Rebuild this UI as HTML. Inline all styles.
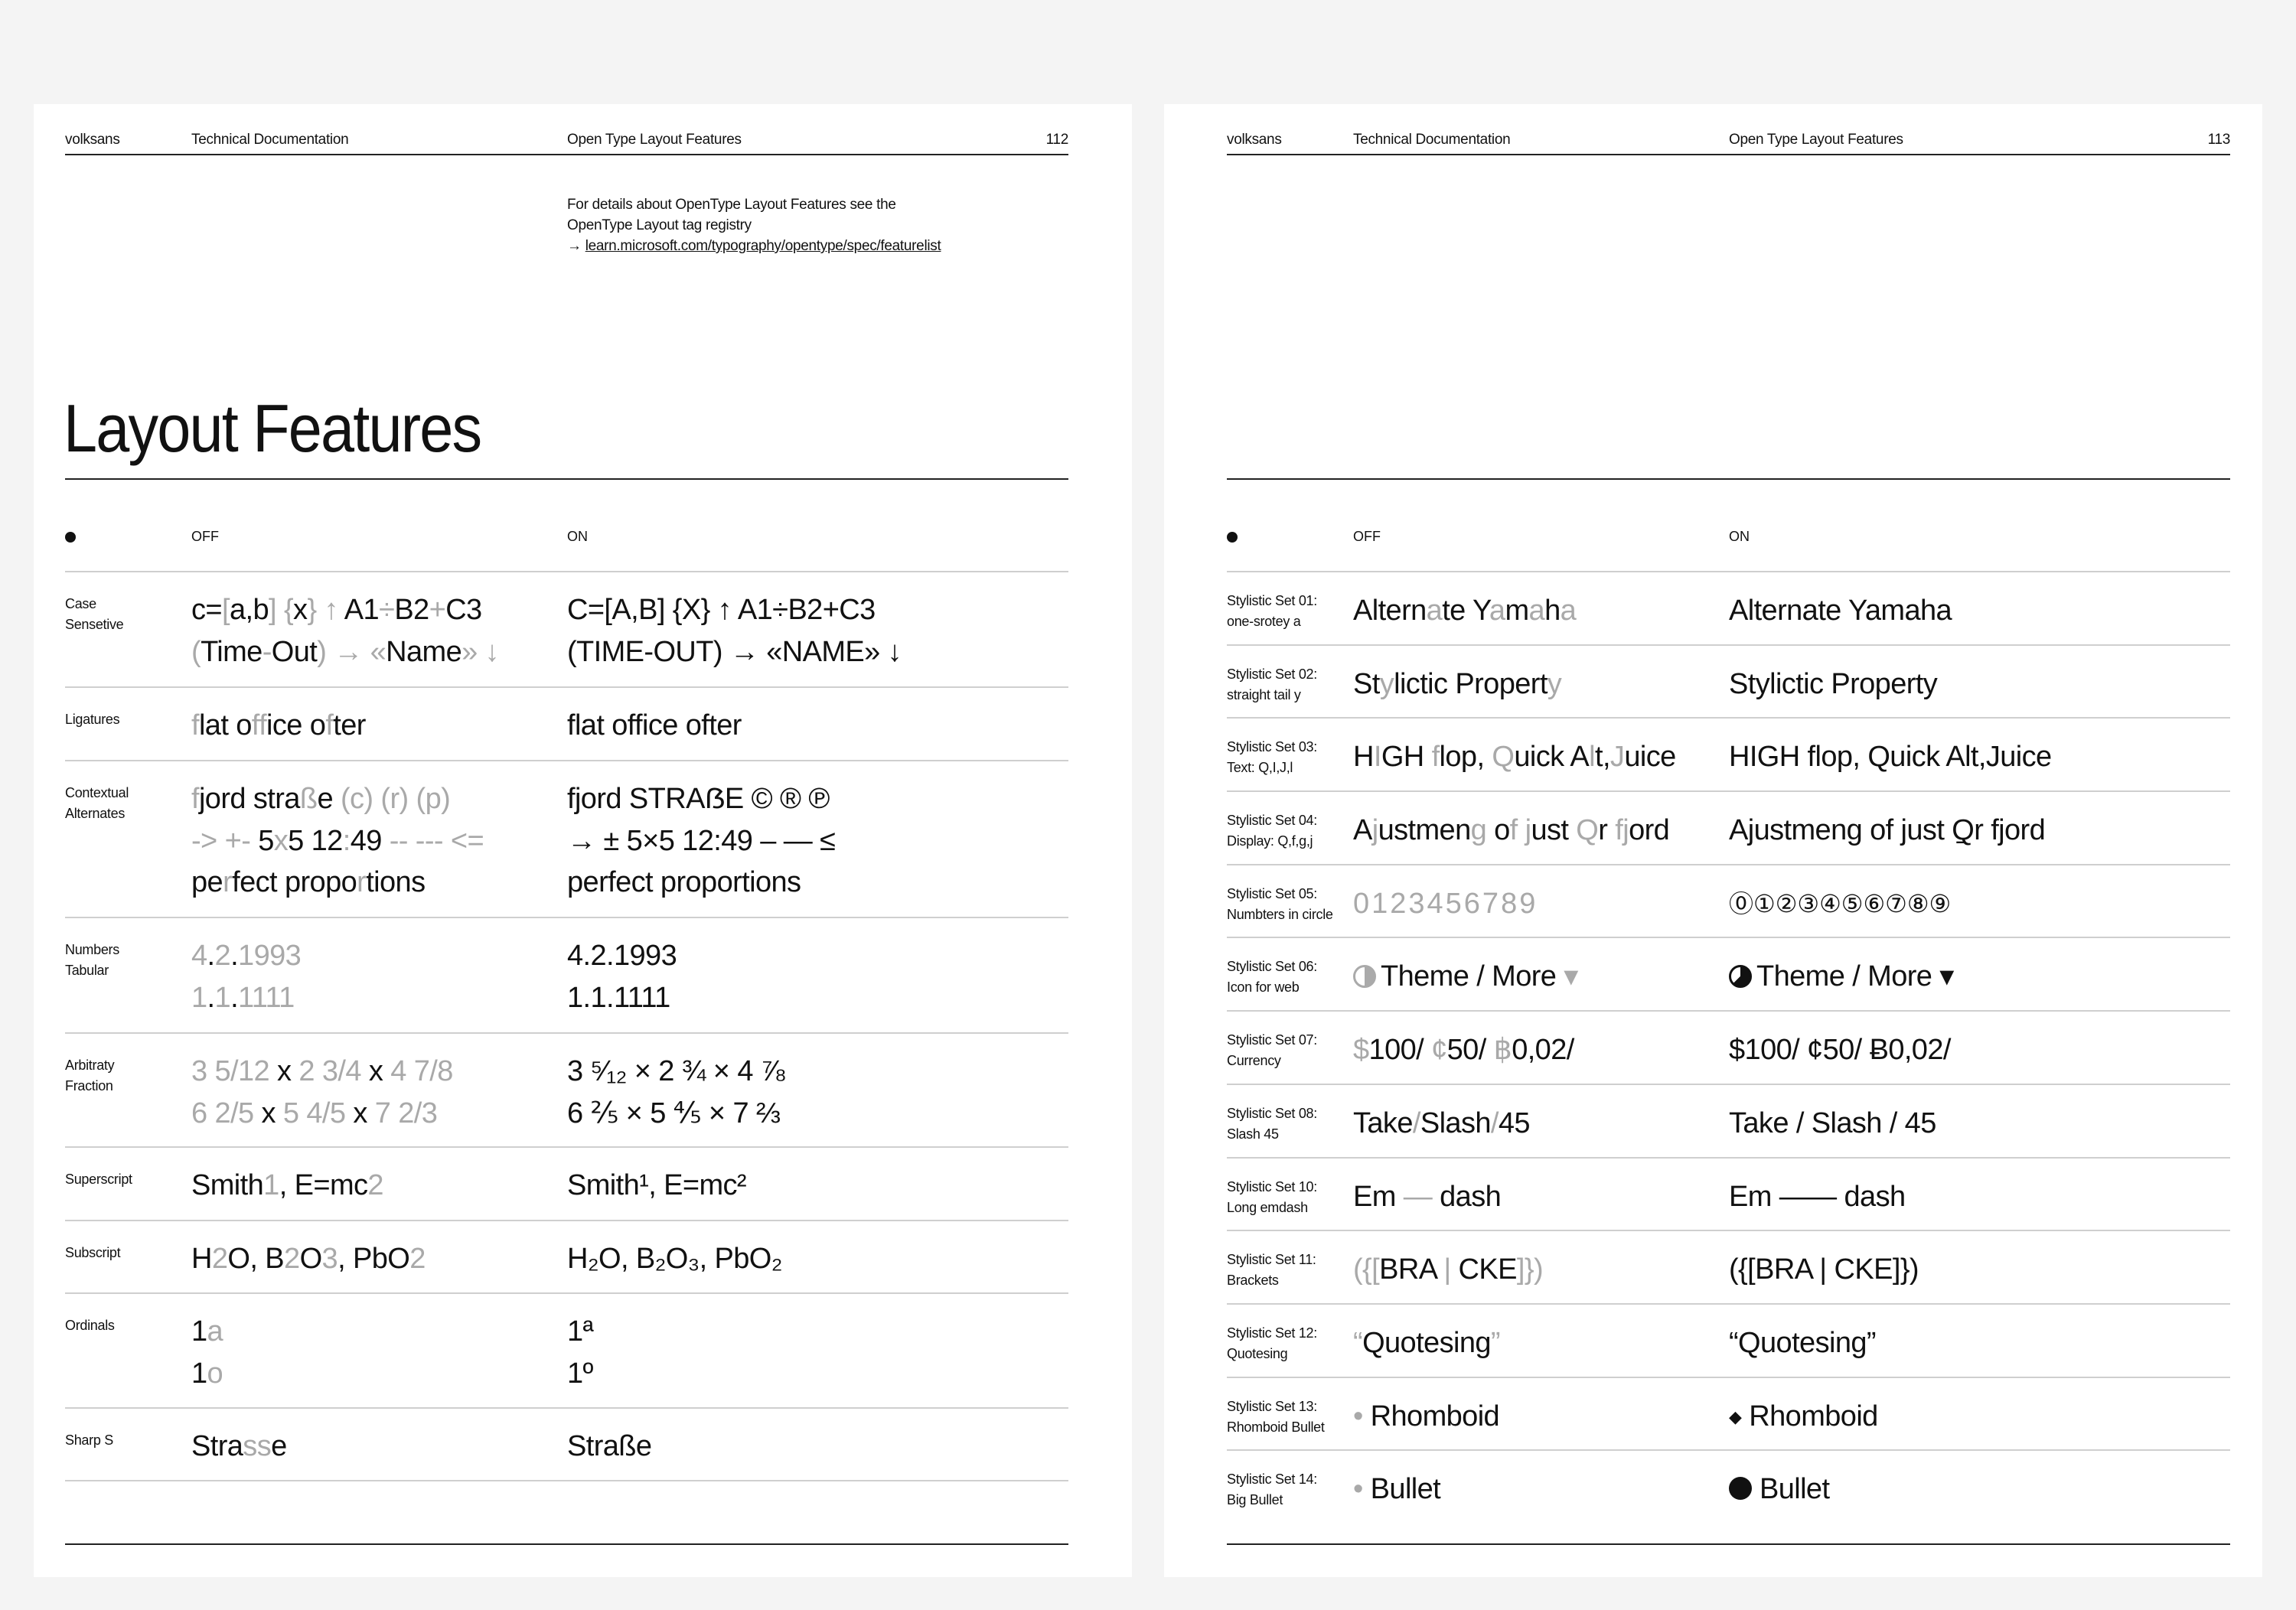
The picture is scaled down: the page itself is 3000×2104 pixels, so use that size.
<!DOCTYPE html>
<html><head><meta charset="utf-8"><style>
*{margin:0;padding:0;box-sizing:border-box}
body{width:3000px;height:2104px;background:#f4f4f4;font-family:"Liberation Sans","DejaVu Sans",sans-serif;color:#111;position:relative;overflow:hidden}
.page{position:absolute;top:136px;width:1435px;height:1925px;background:#fff}
.p1{left:44px}.p2{left:1521px}
.in{position:absolute;left:41px;width:1311px;top:0;height:100%}
.p2 .in{left:82px}
.hdr{position:absolute;top:36px;left:0;width:100%;height:31px;border-bottom:2px solid #222;font-size:19px;letter-spacing:-0.3px}
.hdr span{position:absolute;top:0}
.c1{left:0}.c2{left:165px}.c3{left:656px}
.num{right:0}
.intro{position:absolute;left:656px;top:118px;font-size:19px;line-height:27px;letter-spacing:-0.3px}
.intro u{text-decoration:underline}
.title{position:absolute;left:-2px;top:374px;font-size:88px;letter-spacing:-2px;line-height:100px;transform:scaleX(.9);transform-origin:left;white-space:nowrap}
.tline{position:absolute;left:0;top:489px;width:100%;border-top:2px solid #222}
.hrow{position:absolute;top:555px;left:0;width:100%;height:57px;border-bottom:2px solid #cfcfcf;font-size:18px}
.hrow .dot{position:absolute;left:0;top:4px;width:14px;height:14px;border-radius:50%;background:#111}
.hrow span{position:absolute;top:0}
.rows{position:absolute;top:612px;left:0;width:100%}
.row{position:relative;border-bottom:2px solid #cfcfcf}
.row.nb{border-bottom:none}
.lab{position:absolute;left:0;top:28px;font-size:18px;line-height:27px;letter-spacing:-0.3px}
.off,.on{position:absolute;top:22px;font-size:38px;line-height:54.5px;letter-spacing:-0.6px;white-space:nowrap}
.off{left:165px}.on{left:656px}
.g{color:#a9a9a9}
.bline{position:absolute;left:0;top:1881px;width:100%;border-top:2px solid #222}
.r2 .off,.r2 .on{top:23px}
.r2 .lab{top:24px}
.half{display:inline-block;width:30px;height:30px;border-radius:50%;vertical-align:-3px;margin-right:6px}
</style></head><body>

<div class="page p1"><div class="in">
<div class="hdr"><span class="c1">volksans</span><span class="c2">Technical Documentation</span><span class="c3">Open Type Layout Features</span><span class="num">112</span></div>
<div class="intro">For details about OpenType Layout Features see the<br>OpenType Layout tag registry<br>→ <u>learn.microsoft.com/typography/opentype/spec/featurelist</u></div>
<div class="title">Layout Features</div>
<div class="tline"></div>
<div class="hrow"><div class="dot"></div><span class="c2">OFF</span><span class="c3">ON</span></div>
<div class="rows">
<div class="row" style="height:151px"><div class="lab">Case<br>Sensetive</div>
<div class="off">c=<span class="g">[</span>a,b<span class="g">]</span> <span class="g">{</span>x<span class="g">}</span> <span class="g">↑</span> A1<span class="g">÷</span>B2<span class="g">+</span>C3<br><span class="g">(</span>Time<span class="g">-</span>Out<span class="g">)</span> <span class="g">→ «</span>Name<span class="g">» ↓</span></div>
<div class="on">C=[A,B] {X} ↑ A1÷B2+C3<br>(TIME-OUT) → «NAME» ↓</div></div>
<div class="row" style="height:96px"><div class="lab">Ligatures</div>
<div class="off"><span class="g">f</span>lat o<span class="g">ff</span>ice o<span class="g">f</span>ter</div>
<div class="on">flat office ofter</div></div>
<div class="row" style="height:205px"><div class="lab">Contextual<br>Alternates</div>
<div class="off"><span class="g">f</span>jord stra<span class="g">ß</span>e <span class="g">(c) (r) (p)</span><br><span class="g">-&gt; +-</span> 5<span class="g">x</span>5 12<span class="g">:</span>49 <span class="g">-- --- &lt;=</span><br>pe<span class="g">r</span>fect propo<span class="g">r</span>tions</div>
<div class="on">fjord STRAẞE © ® ℗<br>→ ± 5×5 12:49 – — ≤<br>perfect proportions</div></div>
<div class="row" style="height:151px"><div class="lab">Numbers<br>Tabular</div>
<div class="off g">4<span style="color:#111">.</span>2<span style="color:#111">.</span>1993<br>1<span style="color:#111">.</span>1<span style="color:#111">.</span>1111</div>
<div class="on">4.2.1993<br>1.1.1111</div></div>
<div class="row" style="height:149px"><div class="lab">Arbitraty<br>Fraction</div>
<div class="off"><span class="g">3 5/12</span> x <span class="g">2 3/4</span> x <span class="g">4 7/8</span><br><span class="g">6 2/5</span> x <span class="g">5 4/5</span> x <span class="g">7 2/3</span></div>
<div class="on">3 ⁵⁄₁₂ × 2 ¾ × 4 ⅞<br>6 ⅖ × 5 ⅘ × 7 ⅔</div></div>
<div class="row" style="height:96px"><div class="lab">Superscript</div>
<div class="off">Smith<span class="g">1</span>, E=mc<span class="g">2</span></div>
<div class="on">Smith¹, E=mc²</div></div>
<div class="row" style="height:95px"><div class="lab">Subscript</div>
<div class="off">H<span class="g">2</span>O, B<span class="g">2</span>O<span class="g">3</span>, PbO<span class="g">2</span></div>
<div class="on">H₂O, B₂O₃, PbO₂</div></div>
<div class="row" style="height:150px"><div class="lab">Ordinals</div>
<div class="off">1<span class="g">a</span><br>1<span class="g">o</span></div>
<div class="on">1ª<br>1º</div></div>
<div class="row" style="height:95px"><div class="lab">Sharp S</div>
<div class="off">Stra<span class="g">ss</span>e</div>
<div class="on">Straße</div></div>
</div>
<div class="bline"></div>
</div></div>

<div class="page p2"><div class="in">
<div class="hdr"><span class="c1">volksans</span><span class="c2">Technical Documentation</span><span class="c3">Open Type Layout Features</span><span class="num">113</span></div>
<div class="tline"></div>
<div class="hrow"><div class="dot"></div><span class="c2">OFF</span><span class="c3">ON</span></div>
<div class="rows r2">
<div class="row" style="height:95.7px"><div class="lab">Stylistic Set 01:<br>one-srotey a</div><div class="off">Altern<span class="g">a</span>te Y<span class="g">a</span>m<span class="g">a</span>h<span class="g">a</span></div><div class="on">Alternate Yamaha</div></div>
<div class="row" style="height:95.7px"><div class="lab">Stylistic Set 02:<br>straight tail y</div><div class="off">St<span class="g">y</span>lictic Propert<span class="g">y</span></div><div class="on">Stylictic Property</div></div>
<div class="row" style="height:95.7px"><div class="lab">Stylistic Set 03:<br>Text: Q,I,J,l</div><div class="off">H<span class="g">I</span>GH <span class="g">f</span>lop, <span class="g">Q</span>uick A<span class="g">l</span>t,<span class="g">J</span>uice</div><div class="on">HIGH flop, Quick Alt,Juice</div></div>
<div class="row" style="height:95.7px"><div class="lab">Stylistic Set 04:<br>Display: Q,f,g,j</div><div class="off">A<span class="g">j</span>ustmen<span class="g">g</span> o<span class="g">f</span> <span class="g">j</span>ust <span class="g">Q</span>r <span class="g">fj</span>ord</div><div class="on">Ajustmeng of just Q̱r fjord</div></div>
<div class="row" style="height:95.7px"><div class="lab">Stylistic Set 05:<br>Numbters in circle</div><div class="off g" style="letter-spacing:3px">0123456789</div><div class="on" style="font-size:32px;letter-spacing:0px">⓪①②③④⑤⑥⑦⑧⑨</div></div>
<div class="row" style="height:95.7px"><div class="lab">Stylistic Set 06:<br>Icon for web</div><div class="off"><span class="half" style="border:3px solid #aaa;background:linear-gradient(90deg,#fff 50%,#aaa 50%)"></span>Theme / More <span class="g">▾</span></div><div class="on"><span class="half" style="border:3px solid #111;background:conic-gradient(#111 0 225deg,#fff 225deg 405deg)"></span>Theme / More ▾</div></div>
<div class="row" style="height:95.7px"><div class="lab">Stylistic Set 07:<br>Currency</div><div class="off"><span class="g">$</span>100/ <span class="g">¢</span>50/ <span class="g">฿</span>0,02/</div><div class="on">$100/ ¢50/ Ƀ0,02/</div></div>
<div class="row" style="height:95.7px"><div class="lab">Stylistic Set 08:<br>Slash 45</div><div class="off">Take<span class="g">/</span>Slash<span class="g">/</span>45</div><div class="on">Take / Slash / 45</div></div>
<div class="row" style="height:95.7px"><div class="lab">Stylistic Set 10:<br>Long emdash</div><div class="off">Em <span class="g">—</span> dash</div><div class="on">Em —— dash</div></div>
<div class="row" style="height:95.7px"><div class="lab">Stylistic Set 11:<br>Brackets</div><div class="off"><span class="g">({[</span>BRA <span class="g">|</span> CKE<span class="g">]})</span></div><div class="on">({[BRA | CKE]})</div></div>
<div class="row" style="height:95.7px"><div class="lab">Stylistic Set 12:<br>Quotesing</div><div class="off"><span class="g">“</span>Quotesing<span class="g">”</span></div><div class="on">“Quotesing”</div></div>
<div class="row" style="height:95.7px"><div class="lab">Stylistic Set 13:<br>Rhomboid Bullet</div><div class="off"><span class="g">•</span> Rhomboid</div><div class="on"><span style="font-size:22px;vertical-align:4px">◆</span> Rhomboid</div></div>
<div class="row nb" style="height:95.7px"><div class="lab">Stylistic Set 14:<br>Big Bullet</div><div class="off"><span class="g">•</span> Bullet</div><div class="on"><span style="display:inline-block;width:30px;height:30px;border-radius:50%;background:#111;vertical-align:-2px"></span> Bullet</div></div>
</div>
<div class="bline"></div>
</div></div>
</body></html>
